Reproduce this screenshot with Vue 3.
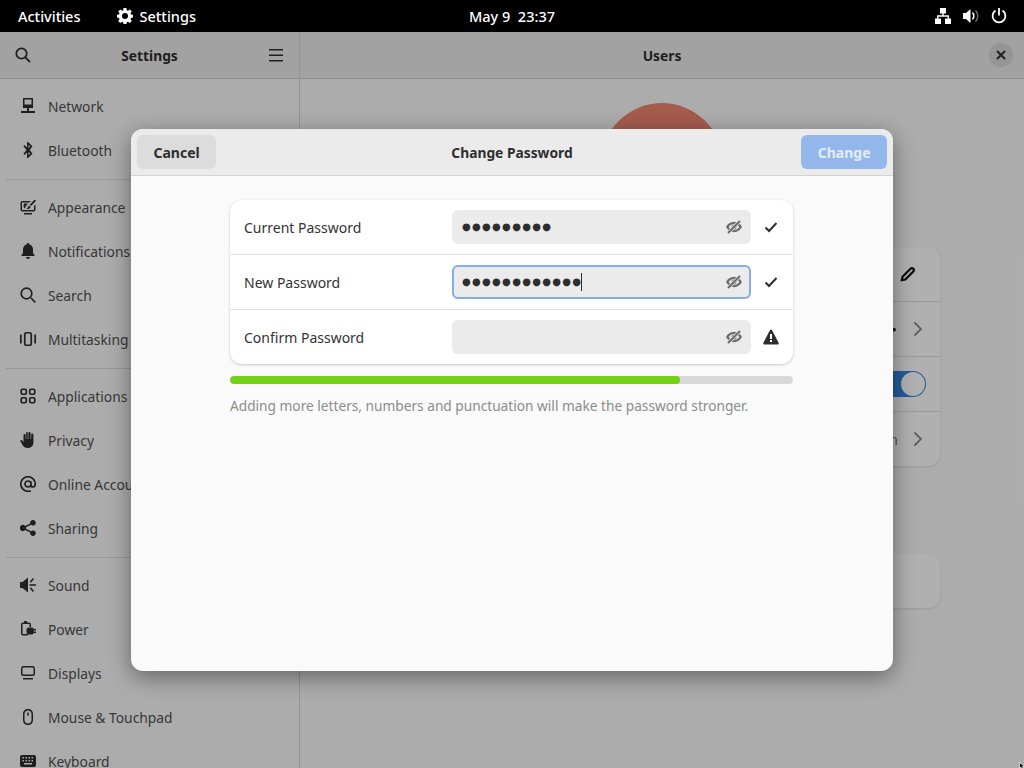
<template>
  <div class="desktop">
    <header class="topbar">
      <div class="topbar-left">
        <span class="activities">Activities</span>
        <span class="app-name">
          <svg class="ico" viewBox="0 0 16 16">
            <path fill-rule="evenodd" d="M6.6 0h2.8l.4 2.2 1.1.5L12.800 1.400l2 2-1.300 1.900.5 1.100 2 .4v2.800l-2 .4-.5 1.100 1.300 1.900-2 2-1.900-1.300-1.100.5-.4 2H6.600l-.4-2-1.100-.5-1.900 1.300-2-2 1.300-1.900-.5-1.100-2-.4V6.800l2-.4.5-1.100L1.200 3.400l2-2 1.900 1.300 1.100-.5zM8 5a3 3 0 1 0 0 6 3 3 0 0 0 0-6z" fill="currentColor"/>
          </svg>
          Settings
        </span>
      </div>
      <div class="clock">May 9&nbsp; 23:37</div>
      <div class="tray">
        <svg class="ico" viewBox="0 0 16 16" fill="currentColor">
          <path d="M5 0h6v5.500H5zM0 10.500h6V16H0zM10 10.500h6V16h-6z"/>
          <path d="M7.300 5h1.400v2.300H14v3.500h-1.400V8.700H3.400v2.100H2V7.300h5.300z"/>
        </svg>
        <svg class="ico" viewBox="0 0 16 16" fill="currentColor">
          <path d="M0 5h3l4.500-4v14L3 11H0z"/>
          <path d="M9 5l1-.9c2.200 2.100 2.200 5.700 0 7.800L9 11c1.400-1.600 1.400-4.400 0-6z"/>
          <path opacity=".45" d="M12 2.800l1-.9c3.200 3.400 3.200 8.800 0 12.200l-1-.9c2.600-2.900 2.600-7.500 0-10.400z"/>
        </svg>
        <svg class="ico" viewBox="0 0 16 16" fill="none" stroke="currentColor" stroke-width="1.800">
          <path d="M8 0v7.500"/>
          <path d="M4.500 2.600a6.400 6.400 0 1 0 7 0"/>
        </svg>
      </div>
    </header>

    <div class="window">
      <aside class="sidebar">
        <div class="headerbar side-head">
          <svg class="ico" viewBox="0 0 16 16" fill="none" stroke="currentColor" stroke-width="1.800">
            <circle cx="6.500" cy="6.500" r="5.200"/>
            <path d="M10.300 10.300L15 15"/>
          </svg>
          <span class="head-title">Settings</span>
          <svg class="ico" viewBox="0 0 16 16" fill="currentColor">
            <path d="M1 2h14v1.500H1zM1 7.500h14V9H1zM1 13h14v1.500H1z"/>
          </svg>
        </div>
        <nav class="nav">
          <template v-for="(group, g) in navGroups" :key="g">
            <div v-if="g" class="nav-sep"></div>
            <div v-for="item in group" :key="item.label" class="nav-row">
              <svg class="ico" viewBox="0 0 16 16">
                <path v-if="item.fill" :d="item.fill" fill="currentColor" fill-rule="evenodd"/>
                <path v-if="item.line" :d="item.line" fill="none" stroke="currentColor" stroke-width="1.700"/>
              </svg>
              <span class="nav-label">{{ item.label }}</span>
            </div>
          </template>
        </nav>
      </aside>

      <main class="content">
        <div class="headerbar main-head">
          <span class="head-title">Users</span>
          <span class="close-btn">
            <svg viewBox="0 0 16 16" fill="none" stroke="currentColor" stroke-width="2">
              <path d="M4 4l8 8M12 4l-8 8"/>
            </svg>
          </span>
        </div>
        <div class="user-page">
          <div class="avatar"></div>
          <div class="card user-card">
            <div class="card-row">
              <span>Name</span>
              <svg class="ico pencil" viewBox="0 0 16 16" fill="none" stroke="currentColor" stroke-width="2.200">
                <path d="M1.800 14.200l.7-3.500 8-8a1.600 1.600 0 0 1 2.800 2.800l-8 8z"/>
              </svg>
            </div>
            <div class="card-row">
              <span>Password</span>
              <span class="row-end">
                <span class="row-dots">●●●●●●</span>
                <svg class="chev" viewBox="0 0 16 16" fill="none" stroke="currentColor" stroke-width="1.800"><path d="M4.500 1.500L11 8l-6.500 6.500"/></svg>
              </span>
            </div>
            <div class="card-row">
              <span>Automatic Login</span>
              <span class="switch"><span class="knob"></span></span>
            </div>
            <div class="card-row">
              <span>Account Activity</span>
              <span class="row-end">
                <span class="row-value">Logged in</span>
                <svg class="chev" viewBox="0 0 16 16" fill="none" stroke="currentColor" stroke-width="1.800"><path d="M4.500 1.500L11 8l-6.500 6.500"/></svg>
              </span>
            </div>
          </div>
          <div class="card extra-card"></div>
        </div>
      </main>
    </div>

    <div class="scrim"></div>

    <section class="dialog">
      <div class="dialog-head">
        <button class="btn">Cancel</button>
        <span class="head-title">Change Password</span>
        <button class="btn btn-primary">Change</button>
      </div>
      <div class="dialog-body">
        <div class="form-card">
          <div v-for="field in fields" :key="field.label" class="form-row">
            <span class="form-label">{{ field.label }}</span>
            <div class="entry" :class="{ focused: field.focused }">
              <span class="dots">{{ '●'.repeat(field.count) }}</span>
              <span v-if="field.focused" class="caret"></span>
              <svg class="eye" viewBox="0 0 16 16">
                <path fill="currentColor" fill-rule="evenodd" d="M8 2.800c3.500 0 6.500 2.200 8 5.200-1.500 3-4.500 5.200-8 5.200S1.500 11 0 8c1.500-3 4.500-5.200 8-5.200zm0 2.200C6 5 4 6.200 2.700 8 4 9.800 6 11 8 11s4-1.200 5.300-3C12 6.200 10 5 8 5zM8 5.500a2.500 2.500 0 1 1 0 5 2.500 2.500 0 0 1 0-5z"/>
                <path d="M14 2L2 14" stroke="#ebebeb" stroke-width="3.400"/>
                <path d="M14 2L2 14" stroke="currentColor" stroke-width="2.100"/>
              </svg>
            </div>
            <svg v-if="field.ok" class="status" viewBox="0 0 16 16" fill="none" stroke="currentColor" stroke-width="2">
              <path d="M2.500 8.500l3.500 3.500 7.500-8"/>
            </svg>
            <svg v-else class="status" viewBox="0 0 16 16" fill="currentColor">
              <path fill-rule="evenodd" d="M8 .5c.5 0 .9.300 1.100.7l6.500 12.500c.4.800-.1 1.800-1.100 1.800h-13c-1 0-1.500-1-1.100-1.800L6.900 1.200C7.100.8 7.500.5 8 .5zM7 5v5h2V5zM7 11v2h2v-2z"/>
            </svg>
          </div>
        </div>
        <div class="meter"><div class="meter-fill" :style="{ width: strength + '%' }"></div></div>
        <p class="hint">Adding more letters, numbers and punctuation will make the password stronger.</p>
      </div>
    </section>

    <svg class="pointer" viewBox="0 0 6 7">
      <path d="M.5 .5v6l1.500-1.300L3 7l1.500-.6-1-1.900H6z" fill="#111" stroke="#fff" stroke-width=".7"/>
    </svg>
  </div>
</template>

<script setup>
const strength = 80

const fields = [
  { label: 'Current Password', count: 9, ok: true },
  { label: 'New Password', count: 12, ok: true, focused: true },
  { label: 'Confirm Password', count: 0, ok: false }
]

const navGroups = [
  [
    {
      label: 'Network',
      fill: 'M3 0h10v10H9v3h6v2H1v-2h6v-3H3zM4.500 1.500v5h7v-5z'
    },
    {
      label: 'Bluetooth',
      fill: 'M7 0l1 0 4.500 4.300L9.800 8l2.700 3.700L8 16H7v-5.500L4.500 13 3.400 11.800 6.500 8 3.400 4.200 4.500 3 7 5.500zM8.500 3v3l1.800-1.500zM8.500 10v3l1.800-1.500z'
    }
  ],
  [
    {
      label: 'Appearance',
      fill: 'M2.500 2h8.300L9.300 3.500H2.500q-.5 0-.5.500v6.500q0 .5.500.5h11q.5 0 .5-.5V7l1.500-1.500v5q0 2-2 2h-11q-2 0-2-2V4q0-2 2-2zM4 14h8v1.500H4zM14.800.5L16 1.700l-5 5.300-1.300-1.200zM9 6.500L10.500 8c-.3 1.500-1.800 2.200-4 2 1-.7 1.400-2 2.500-3.500zM4 4.500h4C6.500 6 5.500 7.500 5 9.500 4 9 3.500 8 3.500 7z'
    },
    {
      label: 'Notifications',
      fill: 'M8 0c.8 0 1.200.5 1.200 1.200C11.500 1.800 13 3.800 13 6.500V10l1.500 2v1h-13v-1L3 10V6.500c0-2.700 1.500-4.700 3.800-5.300C6.800.5 7.200 0 8 0zM6 14h4a2 2 0 0 1-4 0z'
    },
    { label: 'Search', line: 'M11 11l4.300 4.300M11.800 6.500a5.300 5.300 0 1 1-10.600 0 5.300 5.300 0 0 1 10.600 0z' },
    {
      label: 'Multitasking',
      line: 'M6.500 1.750h3q1.750 0 1.750 1.750v9q0 1.750-1.750 1.750h-3q-1.750 0-1.750-1.750v-9q0-1.750 1.750-1.750zM.85 3.500v9M15.150 3.500v9'
    }
  ],
  [
    {
      label: 'Applications',
      line: 'M2.500 1.250h2.500q1.250 0 1.250 1.250v2.500q0 1.250-1.250 1.250H2.500Q1.250 6.250 1.250 5V2.500q0-1.250 1.250-1.250zM11 1.250h2.500q1.250 0 1.250 1.250v2.500q0 1.250-1.250 1.250H11q-1.250 0-1.250-1.250V2.500q0-1.250 1.250-1.250zM2.500 9.750h2.500q1.250 0 1.250 1.250v2.500q0 1.250-1.250 1.250H2.500q-1.250 0-1.250-1.250V11q0-1.250 1.250-1.250zM11 9.750h2.500q1.250 0 1.250 1.250v2.500q0 1.250-1.250 1.250H11q-1.250 0-1.250-1.250V11q0-1.250 1.250-1.250z'
    },
    {
      label: 'Privacy',
      fill: 'M6.700 0a1 1 0 0 1 1.100 1V7h.6V1.200a1.100 1.100 0 0 1 2.200 0V7h.6V2.500a1.100 1.100 0 0 1 2.200 0V10c0 3.500-2 6-5.500 6C5 16 3.800 15 2.800 13.500L.5 9.500c-.6-1 .8-2 1.700-1L3.500 10V3a1.100 1.100 0 0 1 2.200 0v4h.5V1a1 1 0 0 1 .5-1z'
    },
    {
      label: 'Online Accounts',
      line: 'M11 8a3 3 0 1 1-6 0 3 3 0 0 1 6 0zM11 5.500V9q0 2 2 2 2.250 0 2.250-3A7.250 7.250 0 1 0 8 15.250h3',
    },
    {
      label: 'Sharing',
      fill: 'M13 0a2.800 2.800 0 1 1-2 4.800L6 7.300a3 3 0 0 1 0 1.400l5 2.500a2.800 2.800 0 1 1-.8 1.400L5 10.100a3 3 0 1 1 0-4.200l5.200-2.500A2.800 2.800 0 0 1 13 0z'
    }
  ],
  [
    {
      label: 'Sound',
      fill: 'M0 5h2.500L8 .5v15L2.500 11H0zM9.500 7.250H16v1.500H9.500zM9.800 4.800l3-3.800 1.200 1-3 3.700zM9.800 11.200l3 3.800 1.200-1-3-3.700z'
    },
    {
      label: 'Power',
      fill: 'M4 0h3v1.500h2q2 0 2 2V6H9.500V3.500Q9.500 3 9 3H3q-.5 0-.5.500v9q0 .5.500.5h5v1.500H3q-2 0-2-2v-9q0-2 2-2h1zM8 6.500h3.500c1.200 0 2 .7 2.200 1.500H16v1.500h-2.300v1H16V12h-2.300c-.2.800-1 1.500-2.200 1.500H8L6.500 12V8z'
    },
    {
      label: 'Displays',
      fill: 'M3.500 1h9q2.500 0 2.500 2.500v5q0 2.500-2.500 2.500h-9Q1 11 1 8.500v-5Q1 1 3.500 1zm0 1.500q-1 0-1 1v5q0 1 1 1h9q1 0 1-1v-5q0-1-1-1zM3 13h10v1.500H3z'
    },
    {
      label: 'Mouse & Touchpad',
      fill: 'M8 0c3 0 5 2 5 5v6c0 3-2 5-5 5s-5-2-5-5V5c0-3 2-5 5-5zm0 1.500C6 1.500 4.500 3 4.500 5v6c0 2 1.500 3.500 3.500 3.500s3.500-1.500 3.500-3.500V5C11.500 3 10 1.500 8 1.500zM7.250 3.500h1.500v3h-1.500z'
    },
    {
      label: 'Keyboard',
      fill: 'M2 2h12q2 0 2 2v8q0 2-2 2H2q-2 0-2-2V4q0-2 2-2zm.5 2v1.500H4V4zm3 0v1.500H7V4zm3 0v1.500H10V4zm3 0v1.500H13V4zm-9 3v1.500H4V7zm3 0v1.500H7V7zm3 0v1.500H10V7zm3 0v1.500H13V7zM4 10v1.500h8V10z'
    }
  ]
]
</script>

<style>
html, body {
  margin: 0;
  overflow: hidden;
}
</style>

<style scoped>
.desktop {
  position: relative;
  width: 1024px;
  height: 768px;
  overflow: hidden;
  display: flex;
  flex-direction: column;
  background: #fafafa;
  color: #2e2e2e;
  font-family: "Noto Sans", "Open Sans", sans-serif;
  font-size: 14px;
}

.ico {
  width: 16px;
  height: 16px;
  flex: none;
  display: block;
}

.topbar {
  height: 32px;
  flex: none;
  background: #000;
  color: #fff;
  display: flex;
  align-items: center;
  justify-content: space-between;
  position: relative;
  z-index: 3;
  font-size: 14.5px;
  font-weight: 500;
}

.topbar-left {
  display: flex;
  align-items: center;
  gap: 37px;
  padding-left: 18px;
}

.app-name {
  display: flex;
  align-items: center;
  gap: 6px;
}

.clock {
  position: absolute;
  left: 0;
  right: 0;
  text-align: center;
}

.tray {
  display: flex;
  align-items: center;
  gap: 12px;
  padding-right: 17px;
}

.window {
  flex: 1;
  display: flex;
  min-height: 0;
}

.headerbar {
  height: 46px;
  flex: none;
  background: #ebebeb;
  border-bottom: 1px solid #d0d0d0;
  display: flex;
  align-items: center;
}

.head-title {
  font-size: 13.8px;
  font-weight: 700;
}

.sidebar {
  width: 299px;
  flex: none;
  border-right: 1px solid #d6d6d6;
  display: flex;
  flex-direction: column;
}

.side-head {
  justify-content: space-between;
  padding: 0 15px;
}

.nav {
  padding: 5px 0 0 6px;
  font-size: 13.8px;
}

.nav-row {
  height: 44px;
  display: flex;
  align-items: center;
  gap: 12px;
  padding-left: 14px;
  white-space: nowrap;
}

.nav-label {
  color: #505050;
}

.nav-sep {
  height: 1px;
  background: #dcdcdc;
  margin: 7px 0 5px;
}

.content {
  flex: 1;
  display: flex;
  flex-direction: column;
}

.main-head {
  justify-content: center;
  position: relative;
}

.close-btn {
  position: absolute;
  right: 11px;
  top: 11px;
  width: 24px;
  height: 24px;
  border-radius: 50%;
  background: #d8d8d8;
  display: flex;
  align-items: center;
  justify-content: center;
}

.close-btn svg {
  width: 16px;
  height: 16px;
}

.user-page {
  width: 556px;
  margin: 0 auto;
  padding-top: 24px;
  display: flex;
  flex-direction: column;
  align-items: center;
}

.avatar {
  width: 122px;
  height: 122px;
  border-radius: 50%;
  background: #f08572;
}

.card {
  width: 100%;
  background: #fff;
  border-radius: 12px;
  box-shadow: 0 1px 3px rgba(0, 0, 0, .12);
}

.user-card {
  margin-top: 22px;
}

.extra-card {
  height: 54px;
  margin-top: 88px;
}

.card-row {
  height: 54px;
  display: flex;
  align-items: center;
  justify-content: space-between;
  padding: 0 14px 0 12px;
  border-top: 1px solid #dedede;
}

.card-row:first-child {
  border-top: 0;
}

.pencil {
  margin-right: 10px;
  color: #111;
}

.row-end {
  display: flex;
  align-items: center;
  gap: 12px;
}

.row-dots {
  font-family: "DejaVu Sans", sans-serif;
  font-size: 5px;
  letter-spacing: 2px;
}

.row-value {
  color: #777;
}

.chev {
  width: 16px;
  height: 16px;
  color: #8a8a8a;
}

.switch {
  width: 48px;
  height: 26px;
  box-sizing: border-box;
  border-radius: 13px;
  background: #3584e4;
  display: flex;
  justify-content: flex-end;
  padding: 1px;
}

.knob {
  width: 24px;
  height: 24px;
  border-radius: 50%;
  background: #fff;
}

.scrim {
  position: absolute;
  left: 0;
  right: 0;
  top: 32px;
  bottom: 0;
  background: rgba(0, 0, 0, .31);
}

.dialog {
  position: absolute;
  left: 131px;
  top: 129px;
  width: 762px;
  height: 542px;
  border-radius: 12px;
  overflow: hidden;
  background: #fafafa;
  box-shadow: 0 6px 22px rgba(0, 0, 0, .42);
}

.dialog-head {
  height: 47px;
  box-sizing: border-box;
  padding: 6px;
  background: #ebebeb;
  border-bottom: 1px solid #d4d4d4;
  display: grid;
  grid-template-columns: 1fr auto 1fr;
  align-items: start;
}

.dialog-head .btn:first-child {
  justify-self: start;
}

.dialog-head .btn:last-child {
  justify-self: end;
}

.dialog-head .head-title {
  line-height: 36px;
}

.btn {
  height: 34px;
  padding: 0 16.5px;
  border: 0;
  border-radius: 6px;
  background: #dcdcdc;
  color: #2e2e2e;
  font: 700 14px "Noto Sans", "Open Sans", sans-serif;
}

.btn-primary {
  background: #93b7ea;
  color: #e3ecf9;
}

.dialog-body {
  width: 563px;
  margin-left: 99px;
  padding-top: 24px;
}

.form-card {
  background: #fff;
  border-radius: 12px;
  box-shadow: 0 1px 3px rgba(0, 0, 0, .2);
}

.form-row {
  height: 54px;
  display: flex;
  align-items: center;
  padding: 0 14px;
  border-top: 1px solid #e2e2e2;
}

.form-row:first-child {
  border-top: 0;
}

.form-label {
  width: 208px;
  flex: none;
  color: #333;
}

.entry {
  width: 299px;
  height: 34px;
  flex: none;
  box-sizing: border-box;
  border-radius: 6px;
  background: #ebebeb;
  display: flex;
  align-items: center;
  padding: 0 9px 0 10px;
}

.entry.focused {
  outline: 2px solid #84ade8;
  outline-offset: -2px;
}

.dots {
  font-family: "DejaVu Sans", sans-serif;
  font-size: 10px;
  letter-spacing: 1.3px;
  line-height: 34px;
  color: #2e2e2e;
  white-space: nowrap;
}

.caret {
  width: 1px;
  height: 18px;
  margin-left: -1px;
  background: #2e2e2e;
}

.eye {
  width: 16px;
  height: 16px;
  margin-left: auto;
  color: #6e6e6e;
}

.status {
  width: 16px;
  height: 16px;
  flex: none;
  margin-left: 12px;
  color: #2e2e2e;
}

.meter {
  height: 8px;
  margin-top: 12px;
  border-radius: 4px;
  background: #d9d9d9;
  overflow: hidden;
}

.meter-fill {
  height: 100%;
  border-radius: 4px;
  background: #73d216;
}

.hint {
  margin: 12px 0 0;
  font-size: 13.7px;
  color: #8c8c8c;
  white-space: nowrap;
}

.pointer {
  position: absolute;
  left: 1019px;
  top: 762px;
  width: 6px;
  height: 7px;
}
</style>
